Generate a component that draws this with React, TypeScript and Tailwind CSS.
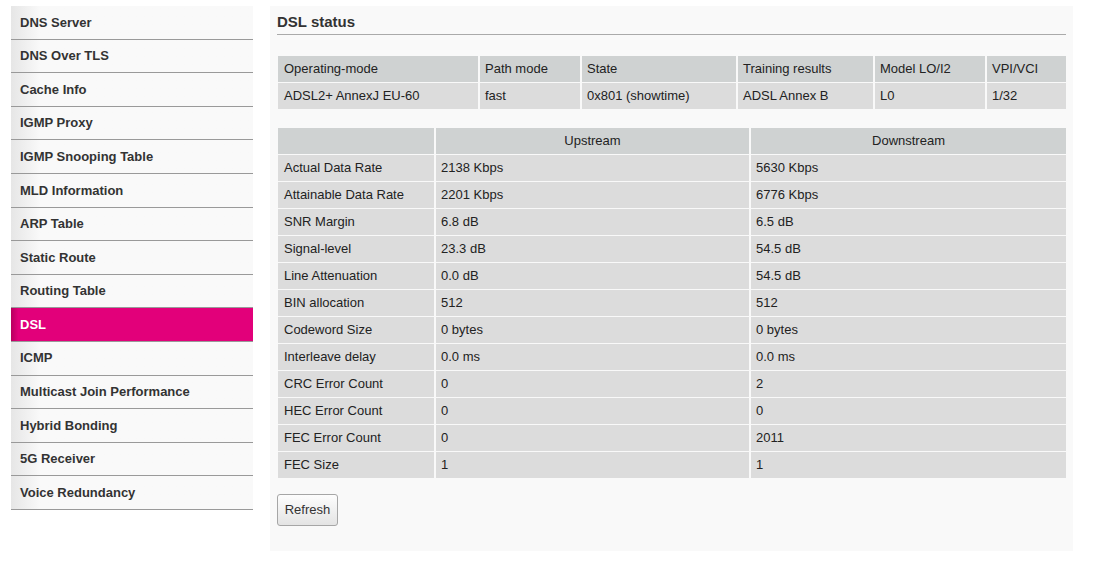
import React from "react";

const menu = [
  "DNS Server",
  "DNS Over TLS",
  "Cache Info",
  "IGMP Proxy",
  "IGMP Snooping Table",
  "MLD Information",
  "ARP Table",
  "Static Route",
  "Routing Table",
  "DSL",
  "ICMP",
  "Multicast Join Performance",
  "Hybrid Bonding",
  "5G Receiver",
  "Voice Redundancy",
];

const statusHead = ["Operating-mode", "Path mode", "State", "Training results", "Model LO/I2", "VPI/VCI"];
const statusRow = ["ADSL2+ AnnexJ EU-60", "fast", "0x801 (showtime)", "ADSL Annex B", "L0", "1/32"];

const lineStats: [string, string, string][] = [
  ["Actual Data Rate", "2138 Kbps", "5630 Kbps"],
  ["Attainable Data Rate", "2201 Kbps", "6776 Kbps"],
  ["SNR Margin", "6.8 dB", "6.5 dB"],
  ["Signal-level", "23.3 dB", "54.5 dB"],
  ["Line Attenuation", "0.0 dB", "54.5 dB"],
  ["BIN allocation", "512", "512"],
  ["Codeword Size", "0 bytes", "0 bytes"],
  ["Interleave delay", "0.0 ms", "0.0 ms"],
  ["CRC Error Count", "0", "2"],
  ["HEC Error Count", "0", "0"],
  ["FEC Error Count", "0", "2011"],
  ["FEC Size", "1", "1"],
];

function Sidebar() {
  return (
    <nav className="w-[242px] shrink-0">
      {menu.map((item) => {
        const active = item === "DSL";
        return (
          <div
            key={item}
            className={
              active
                ? "h-[33.6px] flex items-center pl-[9px] border-b border-[#999] bg-linear-to-r from-[#b8005f] from-0% to-[#e2007a] to-[3%] text-white text-[13px] font-bold"
                : "h-[33.6px] flex items-center pl-[9px] border-b border-[#999] bg-linear-to-r from-[#e6e6e6] to-[#f9f9f9] to-[12%] text-[#333] text-[13px] font-bold"
            }
          >
            {item}
          </div>
        );
      })}
    </nav>
  );
}

function StatusTable() {
  return (
    <div className="ml-px grid grid-cols-[200px_100px_154px_135px_110px_79px] gap-x-[2px] gap-y-px text-[13px] text-[#222]">
      {statusHead.map((h, i) => (
        <div key={h} className={(i === 0 ? "pl-[6px]" : "pl-[5px]") + " h-[26px] flex items-center bg-[#cfd2d2]"}>
          {h}
        </div>
      ))}
      {statusRow.map((c, i) => (
        <div key={c} className={(i === 0 ? "pl-[6px]" : "pl-[5px]") + " h-[26px] flex items-center bg-[#dcdcdc]"}>
          {c}
        </div>
      ))}
    </div>
  );
}

function LineTable() {
  return (
    <div className="ml-px grid grid-cols-[156px_313px_315px] gap-x-[2px] gap-y-px text-[13px] text-[#222]">
      <div className="h-[26px] bg-[#cfd2d2]" />
      <div className="h-[26px] flex items-center justify-center bg-[#cfd2d2]">Upstream</div>
      <div className="h-[26px] flex items-center justify-center bg-[#cfd2d2]">Downstream</div>
      {lineStats.map(([label, up, down]) => (
        <React.Fragment key={label}>
          <div className="h-[26px] flex items-center pl-[6px] bg-[#dcdcdc]">{label}</div>
          <div className="h-[26px] flex items-center pl-[5px] bg-[#dcdcdc]">{up}</div>
          <div className="h-[26px] flex items-center pl-[5px] bg-[#dcdcdc]">{down}</div>
        </React.Fragment>
      ))}
    </div>
  );
}

export default function App() {
  return (
    <div
      className="min-h-[563px] bg-white pt-[6px] pl-[11px] flex gap-[17px] items-start"
      style={{ fontFamily: '"Liberation Sans", Arial, sans-serif' }}
    >
      <Sidebar />
      <main className="w-[803px] h-[545px] bg-[#f9f9f9] px-[7px]">
        <h1 className="pt-[7px] h-[29px] text-[15px] font-bold text-[#333] leading-[18px] border-b border-[#aaa]">
          DSL status
        </h1>
        <div className="mt-[21px]">
          <StatusTable />
        </div>
        <div className="mt-[19px]">
          <LineTable />
        </div>
        <button className="mt-[16px] w-[61px] h-[32px] rounded-[3px] border border-[#a6a6a6] bg-linear-to-b from-[#fdfdfd] to-[#e4e4e4] text-[13px] text-[#333]">
          Refresh
        </button>
      </main>
    </div>
  );
}
